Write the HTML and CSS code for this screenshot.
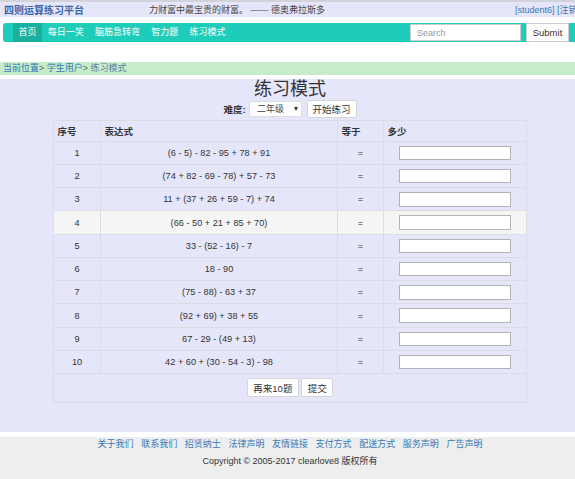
FILE: index.html
```html
<!DOCTYPE html>
<html lang="zh-CN">
<head>
<meta charset="utf-8">
<title>练习模式 - 四则运算练习平台</title>
<link rel="stylesheet" href="styles.css">
</head>
<body>
<div class="page">
  <header class="topbar">
    <a class="brand" href="#">四则运算练习平台</a>
    <span class="quote">力财富中最宝贵的财富。 —— 德奥弗拉斯多</span>
    <span class="user"><a href="#">[student6]</a> <a href="#">[注销]</a></span>
  </header>

  <nav class="navbar">
    <ul class="nav-links">
      <li><a class="active" href="#">首页</a></li>
      <li><a href="#">每日一笑</a></li>
      <li><a href="#">脑筋急转弯</a></li>
      <li><a href="#">智力题</a></li>
      <li><a href="#">练习模式</a></li>
    </ul>
    <form class="search">
      <input class="search-input" type="text" placeholder="Search">
      <button class="search-btn" type="button">Submit</button>
    </form>
  </nav>

  <div class="crumbs">
    <a href="#">当前位置</a><span class="sep">&gt;</span> <a href="#">学生用户</a><span class="sep">&gt;</span> <span class="cur">练习模式</span>
  </div>

  <main class="main">
    <h2 class="title">练习模式</h2>
    <div class="level-row">
      <label class="level-label">难度:</label>
      <span class="select-wrap">
        <select class="level-select">
          <option>二年级</option>
        </select>
      </span>
      <button class="btn" type="button">开始练习</button>
    </div>

    <table class="quiz">
      <colgroup>
        <col class="c1"><col class="c2"><col class="c3"><col class="c4">
      </colgroup>
      <thead>
        <tr class="head"><th>序号</th><th>表达式</th><th>等于</th><th>多少</th></tr>
      </thead>
      <tbody>
        <tr><td>1</td><td>(6 - 5) - 82 - 95 + 78 + 91</td><td>=</td><td><input class="ans" type="text"></td></tr>
        <tr><td>2</td><td>(74 + 82 - 69 - 78) + 57 - 73</td><td>=</td><td><input class="ans" type="text"></td></tr>
        <tr><td>3</td><td>11 + (37 + 26 + 59 - 7) + 74</td><td>=</td><td><input class="ans" type="text"></td></tr>
        <tr class="hover"><td>4</td><td>(66 - 50 + 21 + 85 + 70)</td><td>=</td><td><input class="ans" type="text"></td></tr>
        <tr><td>5</td><td>33 - (52 - 16) - 7</td><td>=</td><td><input class="ans" type="text"></td></tr>
        <tr><td>6</td><td>18 - 90</td><td>=</td><td><input class="ans" type="text"></td></tr>
        <tr><td>7</td><td>(75 - 88) - 63 + 37</td><td>=</td><td><input class="ans" type="text"></td></tr>
        <tr><td>8</td><td>(92 + 69) + 38 + 55</td><td>=</td><td><input class="ans" type="text"></td></tr>
        <tr><td>9</td><td>67 - 29 - (49 + 13)</td><td>=</td><td><input class="ans" type="text"></td></tr>
        <tr><td>10</td><td>42 + 60 + (30 - 54 - 3) - 98</td><td>=</td><td><input class="ans" type="text"></td></tr>
        <tr class="actions"><td colspan="4"><div class="btn-group"><button class="btn" type="button">再来10题</button><button class="btn" type="button">提交</button></div></td></tr>
      </tbody>
    </table>
  </main>

  <footer class="footer">
    <div class="footer-links">
      <a href="#">关于我们</a><a href="#">联系我们</a><a href="#">招贤纳士</a><a href="#">法律声明</a><a href="#">友情链接</a><a href="#">支付方式</a><a href="#">配送方式</a><a href="#">服务声明</a><a href="#">广告声明</a>
    </div>
    <div class="copyright">Copyright © 2005-2017 clearlove8 版权所有</div>
  </footer>
</div>
</body>
</html>
```

FILE: styles.css
```css
html {
  overflow: hidden;
}
body {
  margin: 0;
  font-family: "Liberation Sans", "Noto Sans CJK SC", sans-serif;
  font-size: 9px;
  color: #333;
  background: #fff;
}
a {
  text-decoration: none;
}
.page {
  width: 580px;
  height: 479px;
  display: flex;
  flex-direction: column;
}

/* top bar */
.topbar {
  border-top: 2px solid #d2d2da;
  background: #e6e6fa;
  height: 15px;
  display: flex;
  align-items: center;
  white-space: nowrap;
}
.brand {
  margin-left: 4px;
  font-size: 10px;
  font-weight: bold;
  color: #3567ad;
  flex: none;
}
.quote {
  margin-left: 65px;
  color: #444;
  flex: 1;
  font-size: 9px;
}
.user {
  flex: none;
  color: #337ab7;
}
.user a {
  color: #337ab7;
}

/* nav */
.navbar {
  margin: 6px 0 0 3px;
  height: 19px;
  background: #1ecdb9;
  border-radius: 3px;
  display: flex;
  align-items: stretch;
}
.nav-links {
  list-style: none;
  margin: 0;
  padding: 0 0 0 10px;
  display: flex;
}
.nav-links a {
  display: block;
  padding: 0 5.6px;
  line-height: 19px;
  color: #fff;
  font-size: 9px;
}
.nav-links a.active {
  background: #1aaf9f;
}
.search {
  margin-left: auto;
  margin-right: 10.7px;
  display: flex;
  align-items: center;
  gap: 4.7px;
}
.search-input {
  box-sizing: border-box;
  width: 111px;
  height: 17.5px;
  border: 1px solid #ccc;
  background: #fff;
  padding: 0 6px;
  font: 9px "Liberation Sans", sans-serif;
  color: #555;
}
.search-input::placeholder {
  color: #999;
}
.search-btn {
  box-sizing: border-box;
  width: 43.6px;
  height: 19.5px;
  border: 1px solid #ccc;
  background: #fff;
  font: 9.5px "Liberation Sans", sans-serif;
  color: #333;
  padding: 0;
}

/* breadcrumb */
.crumbs {
  margin-top: 20px;
  height: 12.5px;
  line-height: 12.5px;
  background: #c8ecca;
  padding-left: 3px;
  font-size: 9px;
  white-space: nowrap;
}
.crumbs a {
  color: #337ab7;
}
.crumbs .sep {
  color: #666;
}
.crumbs .cur {
  color: #5b7fa8;
}

/* main */
.main {
  margin-top: 4px;
  background: #e6e6fa;
  height: 353.7px;
  display: flex;
  flex-direction: column;
  align-items: center;
}
.title {
  margin: 0;
  font-size: 18px;
  line-height: 21px;
  font-weight: normal;
  color: #333;
}
.level-row {
  display: flex;
  align-items: center;
  height: 19px;
  margin-bottom: 1px;
}
.level-label {
  font-weight: bold;
  font-size: 9.5px;
  margin-right: 3.5px;
}
.select-wrap {
  position: relative;
  display: inline-block;
  margin-right: 4.5px;
}
.select-wrap::after {
  content: "";
  position: absolute;
  right: 4px;
  top: 6px;
  border-left: 2.5px solid transparent;
  border-right: 2.5px solid transparent;
  border-top: 4px solid #333;
  pointer-events: none;
}
.level-select {
  appearance: none;
  -webkit-appearance: none;
  box-sizing: border-box;
  width: 53px;
  height: 16px;
  border: 1px solid #ddd;
  border-radius: 2px;
  background: #fff;
  padding: 0 0 0 7px;
  font: 9px "Liberation Sans", "Noto Sans CJK SC", sans-serif;
  color: #444;
}
.btn {
  box-sizing: border-box;
  height: 18.5px;
  border: 1px solid #d6d6d6;
  border-radius: 2px;
  background: #fff;
  padding: 0 5px;
  font: 9.5px "Liberation Sans", "Noto Sans CJK SC", sans-serif;
  color: #333;
}

/* table */
.quiz {
  width: 473px;
  table-layout: fixed;
  border-collapse: collapse;
  border: 1px solid #dcdce4;
}
.quiz col.c1 { width: 47px; }
.quiz col.c2 { width: 237px; }
.quiz col.c3 { width: 46px; }
.quiz col.c4 { width: 143px; }
.quiz th,
.quiz td {
  border: 1px solid #dcdce4;
  padding: 0;
}
.quiz th {
  text-align: left;
  font-weight: bold;
  font-size: 9.5px;
  padding-left: 3.5px;
  height: 20.2px;
}
.quiz td {
  text-align: center;
  font-size: 9.2px;
  height: 22.25px;
}
.quiz tr.hover td {
  background: #f5f5f5;
}
.ans {
  box-sizing: border-box;
  display: block;
  margin: 0 auto;
  width: 112px;
  height: 14.5px;
  border: 1px solid #b4b4b4;
  background: #fff;
  padding: 0;
}
.quiz tr.actions td {
  height: 27.5px;
}
.btn-group {
  display: flex;
  justify-content: center;
  gap: 1.7px;
}
.btn-group .btn {
  height: 19px;
  padding: 0 5.8px;
}

/* footer */
.footer {
  margin-top: 5px;
  background: #eee;
  flex: 1;
  text-align: center;
}
.footer-links {
  padding-top: 1px;
  line-height: 12px;
  display: flex;
  justify-content: center;
  gap: 7.6px;
}
.footer-links a {
  color: #337ab7;
  font-size: 9px;
}
.copyright {
  margin-top: 5px;
  line-height: 12px;
  font-size: 9px;
  color: #333;
}
```
